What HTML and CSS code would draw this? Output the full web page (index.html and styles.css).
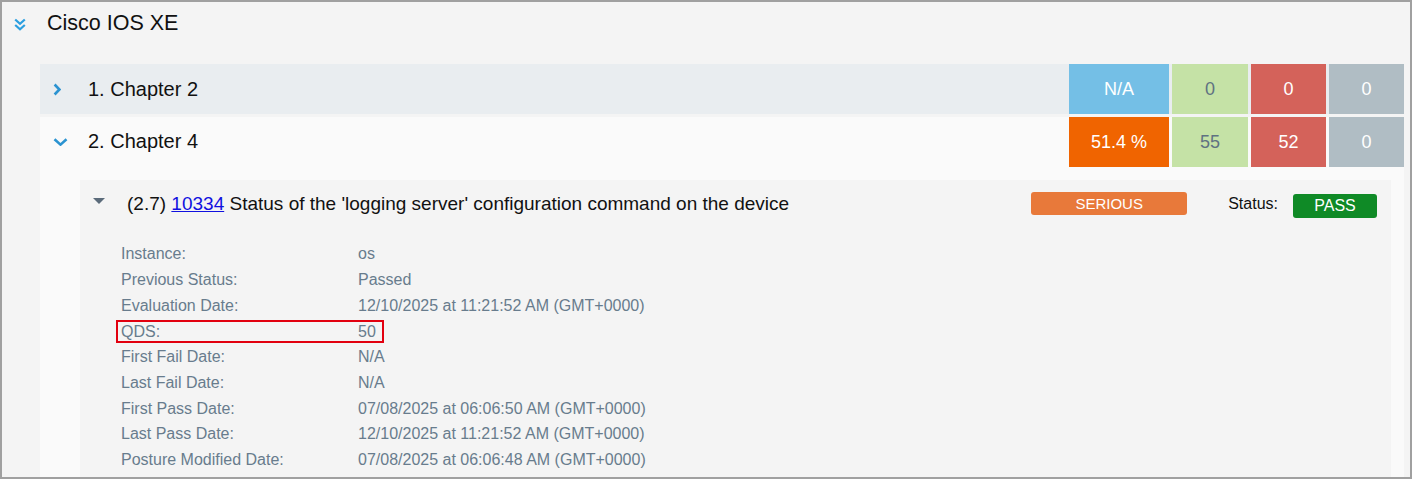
FILE: index.html
```html
<!DOCTYPE html>
<html lang="en">
<head>
  <meta charset="UTF-8" />
  <title>Cisco IOS XE - Posture</title>
  <link rel="stylesheet" href="styles.css">
</head>
<body>

<div class="frame">
  <!-- Platform group -->
  <div class="group-head">
    <svg class="icon-dbl" width="12" height="13" viewBox="0 0 12 13">
      <path d="M1.2 1.5 L6 5.8 L10.8 1.5 M1.2 7 L6 11.3 L10.8 7" fill="none" stroke="#2b9fe0" stroke-width="2.2" />
    </svg>
    <span class="group-title">Cisco IOS XE</span>
  </div>

  <div class="chapters">
    <div class="chapter">
      <div class="chapter-row closed">
        <span class="chev">
          <svg width="8" height="13" viewBox="0 0 8 13"><path d="M1.6 1.5 L6.4 6.5 L1.6 11.5" fill="none" stroke="#2b93d1" stroke-width="2.6" /></svg>
        </span>
        <span class="chapter-name">1. Chapter 2</span>
        <div class="scores">
          <div class="score na">N/A</div>
          <div class="score ok">0</div>
          <div class="score bad">0</div>
          <div class="score other">0</div>
        </div>
      </div>
    </div>

    <div class="chapter">
      <div class="chapter-row open">
        <span class="chev">
          <svg width="15" height="8" viewBox="0 0 15 8"><path d="M1.5 1.3 L7.5 6.6 L13.5 1.3" fill="none" stroke="#2b93d1" stroke-width="2.6" /></svg>
        </span>
        <span class="chapter-name">2. Chapter 4</span>
        <div class="scores">
          <div class="score pct">51.4 %</div>
          <div class="score ok">55</div>
          <div class="score bad">52</div>
          <div class="score other">0</div>
        </div>
      </div>

      <div class="chapter-body">
        <div class="check">
          <div class="check-head">
            <span class="tri"></span>
            <span class="check-title">(2.7) <a href="#">10334</a> Status of the 'logging server' configuration command on the device</span>
            <span class="badge serious">SERIOUS</span>
            <span class="status-label">Status:</span>
            <span class="badge pass">PASS</span>
          </div>

          <div class="facts">
            <div class="fact"><span>Instance:</span><span>os</span></div>
            <div class="fact"><span>Previous Status:</span><span>Passed</span></div>
            <div class="fact"><span>Evaluation Date:</span><span>12/10/2025 at 11:21:52 AM (GMT+0000)</span></div>
            <div class="fact highlight"><span>QDS:</span><span>50</span></div>
            <div class="fact"><span>First Fail Date:</span><span>N/A</span></div>
            <div class="fact"><span>Last Fail Date:</span><span>N/A</span></div>
            <div class="fact"><span>First Pass Date:</span><span>07/08/2025 at 06:06:50 AM (GMT+0000)</span></div>
            <div class="fact"><span>Last Pass Date:</span><span>12/10/2025 at 11:21:52 AM (GMT+0000)</span></div>
            <div class="fact"><span>Posture Modified Date:</span><span>07/08/2025 at 06:06:48 AM (GMT+0000)</span></div>
          </div>
        </div>
      </div>
    </div>
  </div>
</div>

</body>
</html>
```

FILE: styles.css
```css
html, body {
  margin: 0;
  padding: 0;
  font-family: 'Liberation Sans', Arial, sans-serif;
  background-color: #f4f4f4;
}

.frame {
  box-sizing: border-box;
  height: 479px;
  border: 2px solid #a0a0a0;
  background-color: #f4f4f4;
  overflow: hidden;
}

.group-head {
  display: flex;
  align-items: flex-start;
  height: 62px;
  padding-left: 12px;
}

.icon-dbl {
  margin-top: 16px;
}

.group-title {
  margin-top: 8px;
  margin-left: 21px;
  font-size: 21.5px;
  line-height: 26px;
  color: #111;
}

.chapters {
  margin: 0 6px 0 38px;
}

.chapter + .chapter {
  margin-top: 3px;
}

.chapter-row {
  display: flex;
  align-items: center;
  height: 50px;
}

.chapter-row.closed {
  background-color: #e9edf0;
}

.chapter-row.open {
  background-color: #fafafa;
}

.chev {
  display: flex;
  align-items: center;
  width: 35px;
  padding-left: 13px;
}

.chapter-name {
  flex: 1;
  font-size: 20px;
  color: #111;
}

.chapter-row.open .chapter-name {
  margin-top: -2px;
}

.scores {
  display: flex;
  gap: 3px;
  align-self: stretch;
}

.score {
  display: flex;
  align-items: center;
  justify-content: center;
  width: 75px;
  font-size: 18px;
  color: #fff;
}

.score.na { width: 100px; background-color: #74bfe6; }
.score.pct { width: 100px; background-color: #f06400; }
.score.ok { width: 76px; background-color: #c5e2a6; color: #5f7282; }
.score.bad { background-color: #d4625a; }
.score.other { background-color: #b0bdc4; }

.chapter-body {
  background-color: #fafafa;
  padding: 13px 13px 0 40px;
}

.check {
  background-color: #f4f4f4;
  padding-bottom: 20px;
}

.check-head {
  display: flex;
  align-items: center;
  height: 48px;
  padding: 0 14px 0 13px;
}

.tri {
  width: 0;
  height: 0;
  border-left: 6.5px solid transparent;
  border-right: 6.5px solid transparent;
  border-top: 6px solid #5b6b7a;
  margin-top: -6px;
  margin-right: 22px;
}

.check-title {
  flex: 1;
  font-size: 19px;
  color: #111;
}

.check-title a {
  color: #1010e0;
  text-decoration: underline;
}

.badge {
  display: flex;
  align-items: center;
  justify-content: center;
  border-radius: 3px;
  color: #fff;
}

.badge.serious {
  width: 156px;
  height: 23px;
  font-size: 15px;
  background-color: #e8793a;
  margin-top: -1px;
}

.status-label {
  margin-left: 41px;
  margin-right: 15px;
  font-size: 16px;
  color: #111;
}

.badge.pass {
  width: 84px;
  height: 24px;
  font-size: 16px;
  background-color: #0f8a26;
  margin-top: 4px;
}

.facts {
  margin-top: 13px;
  padding-left: 41px;
}

.fact {
  display: grid;
  grid-template-columns: 237px 1fr;
  height: 25.75px;
  line-height: 25.75px;
  font-size: 16px;
  color: #687c8d;
}

.fact.highlight {
  box-sizing: border-box;
  width: 268px;
  height: 23px;
  line-height: 19px;
  margin: 1.375px 0 1.375px -5px;
  padding-left: 3px;
  border: 2px solid #e2000f;
}
```
